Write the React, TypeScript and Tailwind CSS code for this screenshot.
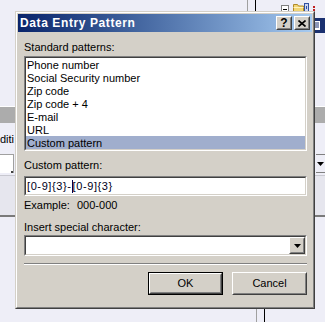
import React from "react";

function Sunken({ className = "", children }: { className?: string; children?: React.ReactNode }) {
  return (
    <div className={"border border-t-[#808080] border-l-[#808080] border-r-white border-b-white " + className}>
      <div className="h-full border border-t-[#404040] border-l-[#404040] border-r-[#d4d0c8] border-b-[#d4d0c8] bg-white">
        {children}
      </div>
    </div>
  );
}

function Raised({ className = "", children }: { className?: string; children?: React.ReactNode }) {
  return (
    <div className={"border border-t-white border-l-white border-r-[#404040] border-b-[#404040] bg-[#d4d0c8] " + className}>
      <div className="h-full flex items-center justify-center border border-t-[#d4d0c8] border-l-[#d4d0c8] border-r-[#808080] border-b-[#808080]">
        {children}
      </div>
    </div>
  );
}

function DownArrow() {
  return (
    <svg width="7" height="4" viewBox="0 0 7 4">
      <path d="M0 0h7L3.5 4z" fill="#000" />
    </svg>
  );
}

function Background() {
  return (
    <div className="flex flex-col w-full h-full">
      <div className="flex h-[106px]">
        <div className="w-[256px]" />
        <div className="w-px bg-[#a0a0a0]" />
        <div className="w-[7px]" />
        <div className="w-px bg-black" />
        <div className="flex-1 flex flex-col">
          <div className="flex h-[14px] items-start">
            <div className="ml-[25px] mt-[5px] w-[8px] h-[8px] border border-[#808080] bg-white flex items-center justify-center">
              <div className="w-[4px] h-px bg-black" />
            </div>
            <svg className="ml-[4px] mt-[3px]" width="11" height="10" viewBox="0 0 11 10">
              <path d="M0.5 1.5h4l1 1.5h5v6.5h-10z" fill="#f2d675" stroke="#b08a2a" />
              <path d="M0.5 4.5h10" stroke="#fff3c0" />
            </svg>
            <svg className="mt-[3px]" width="5" height="9" viewBox="0 0 5 9">
              <rect x="0.5" y="0.5" width="4" height="8" fill="#c9d3ee" stroke="#3050a0" />
              <rect x="2" y="3" width="1" height="3" fill="#3050a0" />
            </svg>
            <div className="ml-[4px] mt-[6px] flex flex-col gap-[1px]">
              <div className="w-[2px] h-[2px] bg-[#c02020]" />
              <div className="w-[2px] h-[2px] bg-[#c02020]" />
            </div>
          </div>
          <div className="flex mt-[4px]">
            <svg className="ml-[53px]" width="16" height="15" viewBox="0 0 16 15">
              <rect width="16" height="15" fill="#1a3070" />
              <rect x="3" y="3" width="8" height="9" fill="#ffffff" />
              <path d="M4 5h6M4 7h6M4 9h6" stroke="#1a3070" />
            </svg>
          </div>
        </div>
      </div>
      <div className="h-px bg-white" />
      <div className="h-[16px] bg-[#acacac]" />
      <div className="h-[31px] pt-[10px]">
        <span className="text-[#000]">diti</span>
      </div>
      <div className="h-[19px] flex">
        <div className="w-[14px] h-full bg-white border-t border-r border-[#a0a0a0] relative">
          <div className="absolute right-0 bottom-0 w-[2px] h-[2px] bg-[#404040]" />
        </div>
        <div className="flex-1" />
        <div className="w-[9px] h-full border-t border-b border-[#808080] flex items-center justify-end pr-[1px]">
          <DownArrow />
        </div>
      </div>
      <div className="h-[3px] flex flex-col justify-end">
        <div className="h-px bg-[#c8c8d0]" />
      </div>
      <div className="h-[39px] bg-[#e6e6ee]" />
      <div className="h-[2px] bg-[#7a7a7a]" />
      <div className="flex-1 flex">
        <div className="w-[256px]" />
        <div className="w-px bg-[#a0a0a0]" />
        <div className="w-[7px]" />
        <div className="w-px bg-black" />
      </div>
    </div>
  );
}

const items = [
  "Phone number",
  "Social Security number",
  "Zip code",
  "Zip code + 4",
  "E-mail",
  "URL",
  "Custom pattern",
];

function Dialog() {
  return (
    <div className="absolute left-[15px] top-[11px] w-[300px] h-[298px] border border-t-[#d4d0c8] border-l-[#d4d0c8] border-r-[#404040] border-b-[#404040]">
      <div className="h-full border border-t-white border-l-white border-r-[#808080] border-b-[#808080] bg-[#d4d0c8] p-px flex flex-col">
        <div className="h-[18px] flex items-center bg-linear-to-r from-[#0a246a] to-[#a6caf0]">
          <span className="pl-[2px] text-white font-bold text-[12px] leading-[14px] tracking-[0.6px]">Data Entry Pattern</span>
          <div className="ml-auto flex gap-[2px] pr-[2px]">
            <Raised className="w-[16px] h-[14px]">
              <span className="font-bold text-[12px] leading-none text-black">?</span>
            </Raised>
            <Raised className="w-[16px] h-[14px]">
              <svg width="8" height="7" viewBox="0 0 8 7">
                <path d="M0.5 0.5l7 6M7.5 0.5l-7 6" stroke="#000" strokeWidth="1.6" />
              </svg>
            </Raised>
          </div>
        </div>
        <div className="flex flex-col pl-[6px] pr-[5px] pt-[9px]">
          <div className="h-[13px]">Standard patterns:</div>
          <Sunken className="mt-[2px] h-[95px]">
            <div className="flex flex-col">
              {items.map((it, i) => (
                <div
                  key={it}
                  className={
                    "h-[13px] pl-px pt-px leading-[13px] whitespace-pre " +
                    (i === items.length - 1 ? "bg-[#a0aecd]" : "")
                  }
                >
                  {it}
                </div>
              ))}
            </div>
          </Sunken>
          <div className="mt-[8px] h-[13px]">Custom pattern:</div>
          <Sunken className="mt-[4px] h-[20px]">
            <div className="h-full flex items-center pl-px tracking-[0.6px] text-[#000020]">
              <span>[0-9]{"{3}"}-</span>
              <span className="inline-block w-px h-[13px] bg-[#000050]" />
              <span>[0-9]{"{3}"}</span>
            </div>
          </Sunken>
          <div className="mt-[3px] h-[13px] flex">
            <span className="w-[53px]">Example:</span>
            <span>000-000</span>
          </div>
          <div className="mt-[9px] h-[13px]">Insert special character:</div>
          <Sunken className="mt-[1px] h-[21px]">
            <div className="h-full flex justify-end">
              <Raised className="w-[16px] h-full">
                <DownArrow />
              </Raised>
            </div>
          </Sunken>
          <div className="mt-[7px] h-px bg-[#808080]" />
          <div className="h-px bg-white" />
          <div className="mt-[7px] flex justify-end gap-[9px]">
            <div className="w-[75px] h-[23px] border border-black">
              <Raised className="h-full">
                <span>OK</span>
              </Raised>
            </div>
            <Raised className="w-[75px] h-[23px]">
              <span>Cancel</span>
            </Raised>
          </div>
        </div>
      </div>
    </div>
  );
}

export default function App() {
  return (
    <div className="relative w-[325px] h-[322px] overflow-hidden bg-[#eeeef7] font-['Liberation_Sans',Arial,sans-serif] text-[11px] leading-[13px] text-black">
      <Background />
      <Dialog />
    </div>
  );
}
